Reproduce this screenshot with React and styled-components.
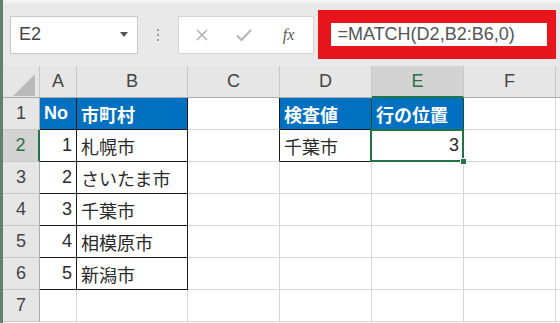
import React from "react";
import styled, { createGlobalStyle } from "styled-components";

const Global = createGlobalStyle`
  html, body {
    margin: 0;
    padding: 0;
    background: #ffffff;
  }
`;

const GREEN = "#217346";
const GRID = "#d6d6d6";
const BLACK = "#1a1a1a";
const BLUE = "#0070c0";

const Page = styled.div`
  width: 560px;
  height: 323px;
  overflow: hidden;
  box-sizing: border-box;
  border-left: 3px solid #62806d;
  display: flex;
  flex-direction: column;
  font-family: "Liberation Sans", "Noto Sans CJK JP", sans-serif;
  background: #ffffff;
`;

const Toolbar = styled.div`
  height: 66px;
  flex: none;
  box-sizing: border-box;
  background: #e9e9e9;
  border-top: 3px solid #f3f3f3;
  display: flex;
  align-items: center;
  padding: 0 4px 0 7px;
`;

const NameBox = styled.div`
  width: 128px;
  height: 38px;
  box-sizing: border-box;
  background: #ffffff;
  border: 1px solid #c9c9c9;
  display: flex;
  align-items: center;
  justify-content: space-between;
  padding: 0 9px 0 8px;
  font-size: 18px;
  color: #444444;
`;

const Caret = styled.span`
  width: 0;
  height: 0;
  border-left: 4px solid transparent;
  border-right: 4px solid transparent;
  border-top: 5px solid #555555;
`;

const Dots = styled.div`
  width: 40px;
  display: flex;
  flex-direction: column;
  align-items: center;
  gap: 3px;
  span {
    width: 2px;
    height: 2px;
    background: #9a9a9a;
  }
`;

const ButtonBox = styled.div`
  width: 137px;
  height: 38px;
  box-sizing: border-box;
  background: #ffffff;
  border: 1px solid #d4d4d4;
  display: flex;
  align-items: center;
  padding-left: 16px;
  gap: 26px;
`;

const Fx = styled.span`
  font-family: "Liberation Serif", serif;
  font-style: italic;
  font-size: 16px;
  color: #5a5a5a;
  margin-left: 4px;
`;

const RedFrame = styled.div`
  margin-left: 4px;
  width: 238px;
  height: 49px;
  box-sizing: border-box;
  background: #e8151d;
  display: flex;
  align-items: center;
  padding: 0 9px 0 13px;
`;

const FormulaInput = styled.div`
  flex: 1;
  height: 23px;
  background: #ffffff;
  display: flex;
  align-items: center;
  padding-left: 6px;
  font-size: 18px;
  color: #555555;
  white-space: nowrap;
`;

const Sheet = styled.div`
  display: grid;
  grid-template-columns: 37px 37px 111px 92px 92px 92px 92px 1fr;
  grid-auto-rows: 32px;
`;

const Cell = styled.div`
  position: relative;
  box-sizing: border-box;
  display: flex;
  align-items: center;
  justify-content: ${p => p.$align || "flex-start"};
  padding: 0 4px;
  font-size: 18px;
  font-weight: ${p => (p.$bold ? "bold" : "normal")};
  color: ${p => p.$color || "#2a2a2a"};
  background: ${p => p.$bg || "#ffffff"};
  border-right: ${p => p.$rw || 1}px solid ${p => p.$right || GRID};
  border-bottom: ${p => p.$bw || 1}px solid ${p => p.$bottom || GRID};
  white-space: nowrap;
  ${p =>
    p.$selected &&
    `
    &::after {
      content: "";
      position: absolute;
      left: -2px;
      top: -1px;
      right: -1px;
      bottom: -1px;
      border: 2px solid ${GREEN};
      z-index: 1;
    }
    &::before {
      content: "";
      position: absolute;
      right: -4px;
      bottom: -4px;
      width: 5px;
      height: 5px;
      background: ${GREEN};
      border: 1px solid #ffffff;
      z-index: 2;
    }
  `}
`;

const HeadCell = styled(Cell)`
  justify-content: center;
  padding: 0;
  color: ${p => (p.$active ? "#2f6d4a" : "#444444")};
  background: ${p => (p.$active ? "#d3d3d3" : "#e6e6e6")};
`;

const Corner = styled(HeadCell)`
  align-items: flex-end;
  justify-content: flex-end;
  padding: 0 4px 1px 0;
`;

const cols = ["A", "B", "C", "D", "E", "F", ""];

const rows = [
  { n: 1, a: "No", b: "市町村", d: "検査値", e: "行の位置", head: true },
  { n: 2, a: "1", b: "札幌市", d: "千葉市", e: "3" },
  { n: 3, a: "2", b: "さいたま市" },
  { n: 4, a: "3", b: "千葉市" },
  { n: 5, a: "4", b: "相模原市" },
  { n: 6, a: "5", b: "新潟市" },
  { n: 7 }
];

const App = () => (
  <Page>
    <Global />
    <Toolbar>
      <NameBox>
        E2
        <Caret />
      </NameBox>
      <Dots>
        <span />
        <span />
        <span />
      </Dots>
      <ButtonBox>
        <svg width="14" height="14" viewBox="0 0 14 14">
          <path d="M2 2 L12 12 M12 2 L2 12" stroke="#b5b5b5" strokeWidth="1.6" />
        </svg>
        <svg width="18" height="14" viewBox="0 0 18 14">
          <path d="M2 7.5 L6.5 12 L16 2" stroke="#b5b5b5" strokeWidth="2" fill="none" />
        </svg>
        <Fx>fx</Fx>
      </ButtonBox>
      <RedFrame>
        <FormulaInput>=MATCH(D2,B2:B6,0)</FormulaInput>
      </RedFrame>
    </Toolbar>
    <Sheet>
      <Corner $bottom="#ababab" $right="#c8c8c8">
        <svg width="22" height="22" viewBox="0 0 22 22">
          <polygon points="22,0 22,22 0,22" fill="#b9b9b9" />
        </svg>
      </Corner>
      {cols.map(c => (
        <HeadCell
          key={c || "g"}
          $active={c === "E"}
          $right="#c8c8c8"
          $bottom={c === "E" ? GREEN : "#ababab"}
          $bw={c === "E" ? 2 : 1}
        >
          {c}
        </HeadCell>
      ))}
      {rows.map(r => {
        const inTable = r.n <= 6;
        const inLookup = r.n <= 2;
        return (
          <React.Fragment key={r.n}>
            <HeadCell
              $active={r.n === 2}
              $right={r.n === 2 ? GREEN : "#ababab"}
              $rw={r.n === 2 ? 2 : 1}
              $bottom="#c8c8c8"
            >
              {r.n}
            </HeadCell>
            <Cell
              $align={r.head ? "flex-start" : "flex-end"}
              $bg={r.head ? BLUE : undefined}
              $bold={r.head}
              $color={r.head ? "#ffffff" : undefined}
              $right={inTable ? BLACK : undefined}
              $bottom={inTable ? BLACK : undefined}
            >
              {r.a}
            </Cell>
            <Cell
              $bg={r.head ? BLUE : undefined}
              $bold={r.head}
              $color={r.head ? "#ffffff" : undefined}
              $right={inTable ? BLACK : undefined}
              $bottom={inTable ? BLACK : undefined}
            >
              {r.b}
            </Cell>
            <Cell $right={inLookup ? BLACK : undefined} />
            <Cell
              $bg={r.head ? BLUE : undefined}
              $bold={r.head}
              $color={r.head ? "#ffffff" : undefined}
              $right={inLookup ? "#1d4f3a" : undefined}
              $bottom={inLookup ? BLACK : undefined}
            >
              {r.d}
            </Cell>
            <Cell
              $align={r.head ? "flex-start" : "flex-end"}
              $bg={r.head ? BLUE : undefined}
              $bold={r.head}
              $color={r.head ? "#ffffff" : undefined}
              $right={inLookup ? "#1d4f3a" : undefined}
              $bottom={inLookup ? "#1d4f3a" : undefined}
              $selected={r.n === 2}
            >
              {r.e}
            </Cell>
            <Cell />
            <Cell />
          </React.Fragment>
        );
      })}
    </Sheet>
  </Page>
);

export default App;
